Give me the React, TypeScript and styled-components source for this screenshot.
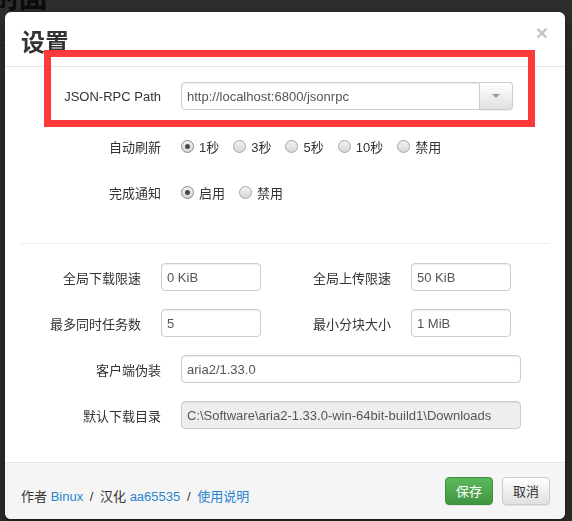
import styled, { createGlobalStyle } from 'styled-components';

const GlobalStyle = createGlobalStyle`
	html, body {
		margin: 0;
		padding: 0;
		height: 100%;
		overflow: hidden;
	}
	body {
		font-family: "Liberation Sans", "Noto Sans CJK SC", sans-serif;
		font-size: 13px;
		color: #333;
		background: #2f2f2f;
	}
	input, button {
		font: inherit;
	}
`;

const refreshOptions = ['1秒', '3秒', '5秒', '10秒', '禁用'];
const notifyOptions = ['启用', '禁用'];

function RadioGroup({ options, checked }: { options: string[]; checked: number }) {
	return (
		<Radios>
			{options.map((opt, i) => (
				<RadioItem key={opt}>
					<RadioDot $on={i === checked}>{i === checked && <Dot />}</RadioDot>
					{opt}
				</RadioItem>
			))}
		</Radios>
	);
}

export default function App() {
	return (
		<>
			<GlobalStyle />
			<Backdrop>
				<PageTitle>控制面</PageTitle>
				<PageRule />
			</Backdrop>
			<Dialog>
				<Header>
					<Title>设置</Title>
					<Close>×</Close>
				</Header>
				<Body>
					<Section>
						<Row $first>
							<Label>JSON-RPC Path</Label>
							<InputGroup>
								<GroupInput defaultValue="http://localhost:6800/jsonrpc" />
								<CaretBtn>
									<Caret />
								</CaretBtn>
							</InputGroup>
						</Row>
						<Row>
							<Label>自动刷新</Label>
							<RadioGroup options={refreshOptions} checked={0} />
						</Row>
						<Row>
							<Label>完成通知</Label>
							<RadioGroup options={notifyOptions} checked={0} />
						</Row>
					</Section>
					<Divider />
					<Section>
						<Row>
							<Half>
								<HalfLabel>全局下载限速</HalfLabel>
								<SmallInput defaultValue="0 KiB" />
							</Half>
							<Half>
								<HalfLabel>全局上传限速</HalfLabel>
								<SmallInput defaultValue="50 KiB" />
							</Half>
						</Row>
						<Row>
							<Half>
								<HalfLabel>最多同时任务数</HalfLabel>
								<SmallInput defaultValue="5" />
							</Half>
							<Half>
								<HalfLabel>最小分块大小</HalfLabel>
								<SmallInput defaultValue="1 MiB" />
							</Half>
						</Row>
						<Row>
							<Label>客户端伪装</Label>
							<WideInput defaultValue="aria2/1.33.0" />
						</Row>
						<Row>
							<Label>默认下载目录</Label>
							<WideInput disabled defaultValue="C:\Software\aria2-1.33.0-win-64bit-build1\Downloads" />
						</Row>
					</Section>
				</Body>
				<Footer>
					<Credits>
						作者 <A>Binux</A> <Slash>/</Slash> 汉化 <A>aa65535</A> <Slash>/</Slash> <A>使用说明</A>
					</Credits>
					<Buttons>
						<Button $primary>保存</Button>
						<Button>取消</Button>
					</Buttons>
				</Footer>
				<Highlight />
			</Dialog>
		</>
	);
}

const Backdrop = styled.div`
	height: 100vh;
	background: #2f2f2f;
	overflow: hidden;
`;

const PageTitle = styled.div`
	margin: -20px 0 0 -42px;
	font-size: 30px;
	font-weight: bold;
	color: #0c0c0c;
	line-height: 34px;
`;

const PageRule = styled.div`
	margin-top: 28px;
	height: 1px;
	background: #3c3c3c;
`;

const Dialog = styled.div`
	position: fixed;
	left: 5px;
	top: 12px;
	width: 560px;
	height: 507px;
	background: #fff;
	border-radius: 6px;
	box-shadow: 0 5px 15px rgba(0, 0, 0, 0.5);
	display: flex;
	flex-direction: column;
	overflow: hidden;
`;

const Header = styled.div`
	height: 54px;
	padding: 0 15px 0 16px;
	border-bottom: 1px solid #e5e5e5;
	display: flex;
	align-items: center;
	justify-content: space-between;
`;

const Title = styled.div`
	font-family: "Noto Sans CJK SC", sans-serif;
	font-size: 24px;
	font-weight: bold;
	color: #333;
	margin-top: 2px;
`;

const Close = styled.div`
	font-size: 21px;
	font-weight: bold;
	color: #c4c4c4;
	margin: -12px 2px 0 0;
`;

const Body = styled.div`
	flex: 1;
	padding: 15px 15px 0;
`;

const Section = styled.div`
	display: flex;
	flex-direction: column;
	gap: 18px;
`;

const Row = styled.div<{ $first?: boolean }>`
	height: 28px;
	display: flex;
	align-items: center;
	margin-bottom: ${({ $first }) => ($first ? '4px' : '0')};
`;

const Label = styled.div`
	width: 141px;
	text-align: right;
	margin-right: 20px;
	flex-shrink: 0;
`;

const Half = styled.div`
	width: 250px;
	display: flex;
	align-items: center;
`;

const HalfLabel = styled(Label)`
	width: 121px;
`;

const Input = styled.input`
	height: 28px;
	box-sizing: border-box;
	border: 1px solid #ccc;
	border-radius: 4px;
	padding: 0 5px;
	color: #555;
	background: #fff;
	box-shadow: inset 0 1px 1px rgba(0, 0, 0, 0.075);
	outline: none;

	&:disabled {
		background: #eee;
	}
`;

const SmallInput = styled(Input)`
	width: 100px;
`;

const WideInput = styled(Input)`
	width: 340px;
`;

const InputGroup = styled.div`
	width: 332px;
	height: 28px;
	display: flex;
`;

const GroupInput = styled(Input)`
	flex: 1;
	min-width: 0;
	border-radius: 4px 0 0 4px;
`;

const CaretBtn = styled.div`
	width: 33px;
	box-sizing: border-box;
	border: 1px solid #ccc;
	border-left: none;
	border-radius: 0 4px 4px 0;
	background: linear-gradient(#fff, #e0e0e0);
	box-shadow: 0 1px 1px rgba(0, 0, 0, 0.06);
	display: grid;
	place-items: center;
`;

const Caret = styled.span`
	width: 0;
	height: 0;
	border-left: 4px solid transparent;
	border-right: 4px solid transparent;
	border-top: 4px solid #999;
`;

const Radios = styled.div`
	display: flex;
	align-items: center;
	gap: 14px;
`;

const RadioItem = styled.div`
	display: flex;
	align-items: center;
	gap: 5px;
`;

const RadioDot = styled.span<{ $on?: boolean }>`
	width: 13px;
	height: 13px;
	box-sizing: border-box;
	border-radius: 50%;
	border: 1px solid ${({ $on }) => ($on ? '#8a8a8a' : '#a6a6a6')};
	background: linear-gradient(#f2f2f2, #d6d6d6);
	display: grid;
	place-items: center;
`;

const Dot = styled.span`
	width: 5px;
	height: 5px;
	border-radius: 50%;
	background: #4a4a4a;
`;

const Divider = styled.div`
	height: 1px;
	background: #eee;
	margin: 37px 0 19px 1px;
`;

const Footer = styled.div`
	height: 57px;
	box-sizing: border-box;
	padding: 0 15px 0 16px;
	background: #f5f5f5;
	border-top: 1px solid #e5e5e5;
	display: flex;
	align-items: center;
	justify-content: space-between;
`;

const Credits = styled.div`
	padding-top: 8px;
	font-size: 13px;
	color: #333;
`;

const A = styled.span`
	color: #2a85d0;
`;

const Slash = styled.span`
	margin: 0 3px;
`;

const Buttons = styled.div`
	display: flex;
	gap: 9px;
	margin-top: -1px;
`;

const Button = styled.button<{ $primary?: boolean }>`
	height: 28px;
	padding: 0 10px;
	border-radius: 4px;
	font-size: 13px;
	border: 1px solid ${({ $primary }) => ($primary ? '#3e8f3e' : '#ccc')};
	color: ${({ $primary }) => ($primary ? '#fff' : '#333')};
	background: ${({ $primary }) =>
		$primary ? 'linear-gradient(#5cb85c, #419641)' : 'linear-gradient(#fff, #e0e0e0)'};
	box-shadow: 0 1px 1px rgba(0, 0, 0, 0.075);
`;

const Highlight = styled.div`
	position: absolute;
	left: 39px;
	top: 38px;
	width: 491px;
	height: 77px;
	box-sizing: border-box;
	border: 7px solid #fd3a3a;
	pointer-events: none;
`;
